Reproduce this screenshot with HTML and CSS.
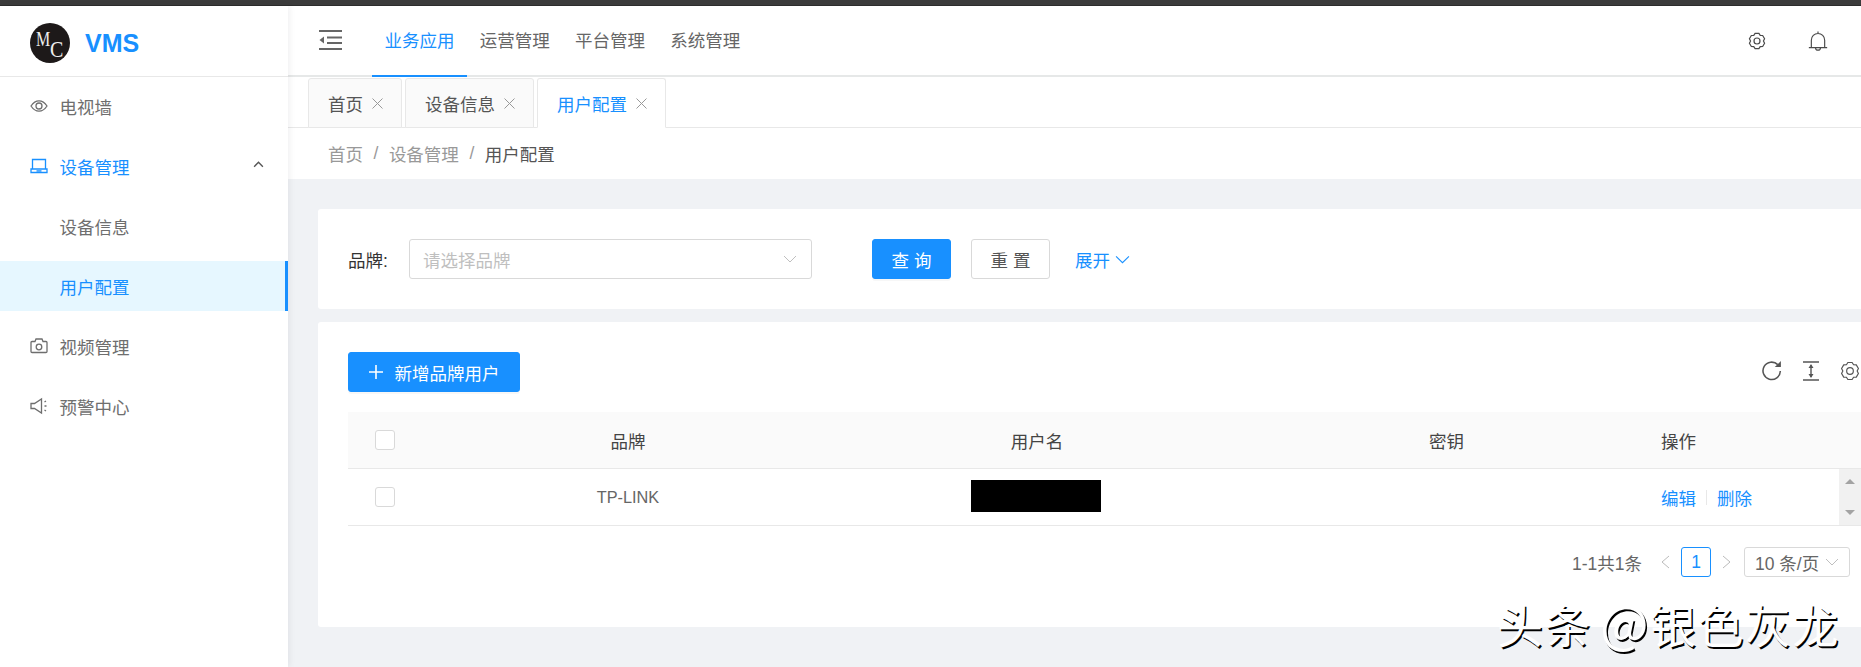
FILE: index.html
```html
<!DOCTYPE html>
<html lang="zh-CN">

<head>
    <meta charset="UTF-8">
    <title>VMS</title>
    <link rel="stylesheet" href="styles.css">
</head>

<body>
    <div class="topbar"></div>
    <div class="layout">
        <aside class="sider">
            <div class="brand">
                <div class="logo"><span class="logo-m">M</span><span class="logo-c">C</span></div>
                <div class="brand-name">VMS</div>
            </div>
            <div class="side-item">
                <svg class="side-icon" viewBox="0 0 18 18"><path d="M1 9C3.5 5.2 6 3.8 9 3.8S14.5 5.2 17 9C14.5 12.8 12 14.2 9 14.2S3.5 12.8 1 9Z"/><circle cx="9" cy="9" r="3"/></svg>
                电视墙
            </div>
            <div class="side-item side-open">
                <svg class="side-icon" viewBox="0 0 18 18"><path d="M2.500 12V2.500H15.500V12"/><path d="M1 12H17V15.500H1ZM6.500 13.800H11.500"/></svg>
                设备管理
                <svg class="side-arrow" viewBox="0 0 12 8"><path d="M1 6.500L6 1.500L11 6.500"/></svg>
            </div>
            <div class="side-item side-sub">设备信息</div>
            <div class="side-item side-sub side-active">用户配置</div>
            <div class="side-item">
                <svg class="side-icon" viewBox="0 0 18 18"><path d="M1 5.500A1 1 0 0 1 2 4.500H5L6 2H12L13 4.500H16A1 1 0 0 1 17 5.500V14.500A1 1 0 0 1 16 15.500H2A1 1 0 0 1 1 14.500Z"/><circle cx="9" cy="10" r="2.800"/></svg>
                视频管理
            </div>
            <div class="side-item">
                <svg class="side-icon" viewBox="0 0 18 18"><path d="M1 6.500H4.500L11.500 2V16L4.500 11.500H1Z"/><path d="M14.500 5L16 4M14.500 9H16.500M14.500 13L16 14"/></svg>
                预警中心
            </div>
        </aside>

        <main class="main">
            <header class="header">
                <svg class="fold" viewBox="0 0 23 20"><path d="M0 1H23M8 7.500H23M8 13H23M0 19H23"/><path class="fold-tri" d="M5 6.500V13.500L0.500 10Z"/></svg>
                <nav class="top-menu">
                    <a class="top-link top-active">业务应用</a>
                    <a class="top-link">运营管理</a>
                    <a class="top-link">平台管理</a>
                    <a class="top-link">系统管理</a>
                </nav>
                <div class="header-right">
                    <svg class="head-icon" viewBox="0 0 24 24"><path d="M9.460 1.810H14.540L16.300 4.550L19.550 4.700L22.090 9.100L20.600 12L22.090 14.900L19.550 19.300L16.300 19.450L14.540 22.190H9.460L7.700 19.450L4.450 19.300L1.910 14.900L3.400 12L1.910 9.100L4.450 4.700L7.700 4.550Z"/><circle cx="12" cy="12" r="4"/></svg>
                    <svg class="head-icon bell" viewBox="0 0 24 24"><path d="M4 20V11A8 8 0 0 1 20 11V20M1 20H23M12 0.500V3M9 20A3 3 0 0 0 15 20"/></svg>
                </div>
            </header>

            <div class="tabs">
                <div class="tab">首页<svg class="tab-x" viewBox="0 0 11 11"><path d="M0.500 0.500L10.500 10.500M10.500 0.500L0.500 10.500"/></svg></div>
                <div class="tab">设备信息<svg class="tab-x" viewBox="0 0 11 11"><path d="M0.500 0.500L10.500 10.500M10.500 0.500L0.500 10.500"/></svg></div>
                <div class="tab tab-active">用户配置<svg class="tab-x" viewBox="0 0 11 11"><path d="M0.500 0.500L10.500 10.500M10.500 0.500L0.500 10.500"/></svg></div>
            </div>

            <div class="crumbs">
                <span>首页</span><span class="crumb-sep">/</span><span>设备管理</span><span class="crumb-sep">/</span><span class="crumb-now">用户配置</span>
            </div>

            <div class="content">
                <section class="card search">
                    <label class="search-label">品牌:</label>
                    <div class="select">
                        <span class="placeholder">请选择品牌</span>
                        <svg class="chev" viewBox="0 0 14 8"><path d="M1 1L7 7L13 1"/></svg>
                    </div>
                    <button class="btn btn-primary">查 询</button>
                    <button class="btn">重 置</button>
                    <a class="expand">展开<svg class="chev" viewBox="0 0 14 8"><path d="M1 1L7 7L13 1"/></svg></a>
                </section>

                <section class="card list">
                    <div class="toolbar">
                        <button class="btn btn-primary btn-add">
                            <svg class="plus" viewBox="0 0 14 14"><path d="M7 0V14M0 7H14"/></svg>
                            新增品牌用户
                        </button>
                        <div class="tools">
                            <svg class="tool" viewBox="1 1 18 18"><path d="M17.500 10A7.800 7.800 0 1 1 15.200 4.300"/><path class="tool-fill" d="M18 1V6.500H12.500Z"/></svg>
                            <svg class="tool tool-height" viewBox="0 0 16 20"><path d="M0 1H16M0 19H16M8 4V16"/><path class="tool-fill" d="M8 3L10.500 7H5.500ZM8 17L5.500 13H10.500Z"/></svg>
                            <svg class="tool" viewBox="0 0 24 24"><path d="M9.460 1.810H14.540L16.300 4.550L19.550 4.700L22.090 9.100L20.600 12L22.090 14.900L19.550 19.300L16.300 19.450L14.540 22.190H9.460L7.700 19.450L4.450 19.300L1.910 14.900L3.400 12L1.910 9.100L4.450 4.700L7.700 4.550Z"/><circle cx="12" cy="12" r="4"/></svg>
                        </div>
                    </div>

                    <div class="table-head">
                        <div class="cell-check"><span class="checkbox"></span></div>
                        <div class="cell">品牌</div>
                        <div class="cell">用户名</div>
                        <div class="cell">密钥</div>
                        <div class="cell-action">操作</div>
                    </div>
                    <div class="table-row">
                        <div class="cell-check"><span class="checkbox"></span></div>
                        <div class="cell cell-brand">TP-LINK</div>
                        <div class="cell"><span class="masked"></span></div>
                        <div class="cell"></div>
                        <div class="cell-action"><a>编辑</a><i class="divider"></i><a>删除</a></div>
                        <div class="scroll"><i class="scroll-up"></i><i class="scroll-down"></i></div>
                    </div>

                    <div class="pager">
                        <span class="pager-total">1-1共1条</span>
                        <svg class="pager-arrow" viewBox="0 0 10 14"><path d="M9 1L2 7L9 13"/></svg>
                        <span class="pager-num">1</span>
                        <svg class="pager-arrow" viewBox="0 0 10 14"><path d="M1 1L8 7L1 13"/></svg>
                        <div class="pager-size">10 条/页<svg class="chev" viewBox="0 0 14 8"><path d="M1 1L7 7L13 1"/></svg></div>
                    </div>
                </section>
            </div>
        </main>
    </div>
    <div class="watermark">头条 <span class="watermark-at">@</span>银色灰龙</div>
</body>

</html>
```

FILE: styles.css
```css
* {
    margin: 0;
    padding: 0;
    box-sizing: border-box;
}

html,
body {
    height: 100%;
    overflow: hidden;
}

body {
    background: #f0f2f5;
    font-family: "Liberation Sans", "Noto Sans CJK SC", sans-serif;
    font-size: 17.5px;
    color: #666;
    position: relative;
}

svg {
    fill: none;
    stroke: currentColor;
    flex: none;
}

.topbar {
    height: 6px;
    background: #3b3b3b;
    border-bottom: 1px solid #2c2c2c;
}

.layout {
    display: flex;
    height: 661px;
}

/* sidebar */
.sider {
    width: 288px;
    flex: none;
    display: flex;
    flex-direction: column;
    background: #fff;
    box-shadow: 2px 0 6px rgba(0, 21, 41, 0.06);
    position: relative;
    z-index: 2;
}

.brand {
    height: 70px;
    flex: none;
    display: flex;
    align-items: center;
    padding-left: 30px;
    padding-top: 4px;
    box-shadow: 0 1px 0 #e8e8e8;
}

.logo {
    width: 40px;
    height: 40px;
    border-radius: 50%;
    background: #1d1919;
    color: #eee;
    font-family: "Liberation Serif", serif;
    position: relative;
}

.logo-m {
    position: absolute;
    left: 6px;
    top: 8px;
    font-size: 16px;
    line-height: 16px;
    transform: scaleY(1.3);
}

.logo-c {
    position: absolute;
    left: 20px;
    top: 16px;
    font-size: 20px;
    line-height: 20px;
    transform: scaleY(1.2);
}

.brand-name {
    margin-left: 15px;
    font-size: 25px;
    font-weight: bold;
    color: #1890ff;
}

.side-item {
    height: 50px;
    flex: none;
    margin: 5px 0;
    padding-left: 30px;
    display: flex;
    align-items: center;
    gap: 11.500px;
    color: #6e6e6e;
    position: relative;
}

.side-icon {
    width: 18px;
    height: 18px;
    stroke-width: 1.300;
}

.side-open {
    color: #1890ff;
}

.side-arrow {
    width: 11px;
    height: 7px;
    position: absolute;
    right: 24px;
    top: 20px;
    color: #555;
    stroke-width: 1.600;
}

.side-sub {
    padding-left: 59.500px;
}

.side-active {
    background: #e6f7ff;
    color: #1890ff;
    border-right: 3px solid #1890ff;
}

/* main area */
.main {
    flex: 1;
    min-width: 0;
    overflow: hidden;
}

.header {
    height: 71px;
    background: #fff;
    border-bottom: 2px solid #e6e8e8;
    display: flex;
    padding-left: 31px;
}

.fold {
    width: 23px;
    height: 20px;
    margin-top: 24px;
    color: #666;
    stroke-width: 2;
}

.fold-tri {
    fill: #666;
    stroke: none;
}

.top-menu {
    display: flex;
    margin-left: 30px;
}

.top-link {
    width: 95.200px;
    height: 71px;
    line-height: 70px;
    text-align: center;
    color: #666;
}

.top-active {
    color: #1890ff;
    border-bottom: 2px solid #1890ff;
}

.header-right {
    margin-left: auto;
    display: flex;
    align-items: center;
    gap: 42px;
    padding: 1px 33px 0 0;
}

.head-icon {
    width: 18px;
    height: 18px;
    color: #4a4a4a;
    stroke-width: 1.600;
}

.bell {
    width: 20px;
    height: 22px;
    stroke-width: 1.400;
}

.tabs {
    height: 51px;
    background: #fff;
    border-bottom: 1px solid #e8e8e8;
    padding: 1px 0 0 20px;
    display: flex;
    gap: 3px;
}

.tab {
    height: 50px;
    padding: 0 18px 0 19px;
    display: flex;
    align-items: center;
    gap: 9px;
    background: #fafafa;
    border: 1px solid #e8e8e8;
    border-radius: 3px 3px 0 0;
    color: #555;
}

.tab-active {
    background: #fff;
    border-bottom-color: #fff;
    color: #1890ff;
}

.tab-x {
    width: 11px;
    height: 11px;
    color: #999;
}

.crumbs {
    height: 51px;
    background: #fff;
    padding-left: 40px;
    display: flex;
    align-items: center;
    color: #999;
}

.crumb-sep {
    margin: 0 10.500px;
}

.crumb-now {
    color: #555;
}

.content {
    padding: 30px 0 0 30px;
    display: flex;
    flex-direction: column;
    gap: 13px;
}

.card {
    background: #fff;
    border-radius: 3px 0 0 3px;
}

/* search card */
.search {
    height: 100px;
    padding-left: 30px;
    display: flex;
    align-items: center;
}

.search-label {
    width: 61px;
    color: #333;
}

.select {
    width: 403px;
    height: 40px;
    margin-right: 60px;
    padding: 0 14px 0 13px;
    display: flex;
    align-items: center;
    justify-content: space-between;
    border: 1px solid #d9d9d9;
    border-radius: 3px;
}

.placeholder {
    color: #bfbfbf;
}

.chev {
    width: 14px;
    height: 8px;
    color: #bfbfbf;
}

.btn {
    width: 79px;
    height: 40px;
    background: #fff;
    border: 1px solid #d9d9d9;
    border-radius: 3px;
    color: #555;
    font-family: inherit;
    font-size: 17.5px;
    margin-right: 20px;
}

.btn-primary {
    background: #1890ff;
    border-color: #1890ff;
    color: #fff;
    box-shadow: 0 2px 0 rgba(0, 0, 0, 0.03);
}

.expand {
    margin-left: 5px;
    display: flex;
    align-items: center;
    gap: 5px;
    color: #1890ff;
}

.expand .chev {
    width: 15px;
    height: 9px;
    color: #1890ff;
}

/* list card */
.list {
    height: 305px;
    padding: 30px 0 0 30px;
}

.toolbar {
    display: flex;
    justify-content: space-between;
    align-items: center;
    margin-bottom: 20px;
}

.btn-add {
    width: 172px;
    margin: 0;
    display: flex;
    align-items: center;
    justify-content: center;
    gap: 12px;
}

.plus {
    width: 14px;
    height: 14px;
    stroke-width: 1.600;
}

.tools {
    display: flex;
    align-items: center;
    gap: 21px;
    color: #555;
    padding: 0 1.500px 3px 0;
}

.tool {
    width: 20px;
    height: 20px;
    stroke-width: 1.400;
}

.tool-height {
    width: 16px;
}

.tool-fill {
    fill: #555;
    stroke: none;
}

.table-head,
.table-row {
    display: grid;
    grid-template-columns: 66px 428px 390px 429px 178px 22px;
    align-items: center;
    text-align: center;
    border-bottom: 1px solid #e8e8e8;
}

.table-head {
    height: 57px;
    background: #fafafa;
    color: #444;
}

.table-row {
    height: 57px;
    color: #666;
}

.cell-check {
    padding-left: 27px;
    text-align: left;
}

.cell-brand {
    font-size: 16.300px;
}

.checkbox {
    display: block;
    width: 20px;
    height: 20px;
    background: #fff;
    border: 1px solid #d9d9d9;
    border-radius: 3px;
}

.cell-action {
    text-align: left;
    color: #444;
    display: flex;
    align-items: center;
}

.cell-action a {
    color: #1890ff;
}

.divider {
    width: 1px;
    height: 15px;
    margin: 0 10px;
    background: #e8e8e8;
}

.masked {
    display: block;
    width: 130px;
    height: 32px;
    margin: -1px auto 1px;
    transform: translateX(-1px);
    background: #000;
}

.scroll {
    height: 56px;
    background: #f1f1f1;
    display: flex;
    flex-direction: column;
    justify-content: space-between;
    align-items: center;
    padding: 10px 0;
}

.scroll-up,
.scroll-down {
    width: 0;
    height: 0;
    border-left: 5px solid transparent;
    border-right: 5px solid transparent;
}

.scroll-up {
    border-bottom: 5px solid #a3a3a3;
}

.scroll-down {
    border-top: 5px solid #a3a3a3;
}

.pager {
    height: 30px;
    margin-top: 21px;
    padding-right: 11px;
    display: flex;
    justify-content: flex-end;
    align-items: center;
    color: #666;
}

.pager-total {
    margin-right: 18px;
}

.pager-arrow {
    width: 10px;
    height: 14px;
    color: #bbb;
}

.pager-num {
    width: 30px;
    height: 30px;
    margin: 0 11px;
    border: 1px solid #1890ff;
    border-radius: 3px;
    color: #1890ff;
    text-align: center;
    line-height: 28px;
}

.pager-size {
    width: 106px;
    height: 30px;
    margin-left: 12px;
    padding: 0 10px;
    display: flex;
    align-items: center;
    justify-content: space-between;
    border: 1px solid #d9d9d9;
    border-radius: 3px;
}

/* site watermark over the screenshot: white glyphs with a hard black offset */
.watermark {
    position: absolute;
    left: 1497px;
    top: 588px;
    font-family: "Noto Sans CJK SC", sans-serif;
    font-size: 46px;
    line-height: 66px;
    white-space: nowrap;
    color: #fff;
    letter-spacing: 1.500px;
    word-spacing: -3.500px;
    text-shadow: 1.500px 2px 0 #000;
    z-index: 5;
}

.watermark-at {
    font-size: 51px;
}
```
